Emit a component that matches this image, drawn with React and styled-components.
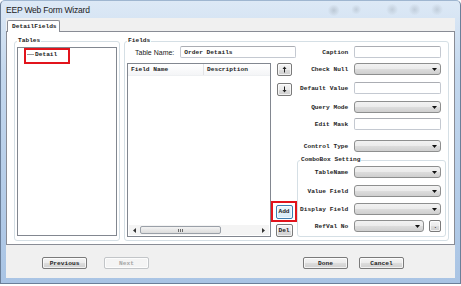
import React from "react";
import styled, { createGlobalStyle } from "styled-components";

const mono = `"Liberation Mono", "DejaVu Sans Mono", monospace`;
const sans = `"Liberation Sans", Arial, sans-serif`;

const Global = createGlobalStyle`
  html, body { margin: 0; padding: 0; background: #fff; }
  body { width: 461px; height: 286px; overflow: hidden; }
  * { box-sizing: border-box; }
`;

const Window = styled.div`
  width: 461px;
  height: 284px;
  display: flex;
  flex-direction: column;
  padding: 0 5px 5px;
  border: 1px solid #6b7f99;
  border-top-color: #9fb6d0;
  border-radius: 5px 5px 0 0;
  background: linear-gradient(180deg, #dde9f6 0%, #c4d8ee 25%, #a9c4e4 100%);
`;

const TitleBar = styled.div`
  height: 17px;
  display: flex;
  align-items: center;
  font-family: ${sans};
  font-size: 8.5px;
  letter-spacing: -0.2px;
  color: #1b1b1b;
  background:
    radial-gradient(circle at 73% 55%, rgba(120,130,140,.3) 0, rgba(120,130,140,0) 6px),
    radial-gradient(circle at 78% 50%, rgba(120,130,140,.25) 0, rgba(120,130,140,0) 5px),
    radial-gradient(circle at 86% 50%, rgba(120,130,140,.25) 0, rgba(120,130,140,0) 6px),
    radial-gradient(circle at 91% 50%, rgba(120,130,140,.25) 0, rgba(120,130,140,0) 6px),
    radial-gradient(circle at 96% 50%, rgba(120,130,140,.25) 0, rgba(120,130,140,0) 6px);
`;

const Client = styled.div`
  flex: 1;
  display: flex;
  flex-direction: column;
  background: #f0f0f0;
  font-family: ${mono};
  font-size: 6.2px;
  font-weight: bold;
  color: #1e1e1e;
`;

const TabStrip = styled.div`
  height: 13px;
  display: flex;
  align-items: flex-end;
  padding-left: 1px;
`;

const Tab = styled.div`
  width: 53px;
  height: 12px;
  margin-bottom: -1px;
  position: relative;
  z-index: 1;
  display: flex;
  align-items: center;
  padding-left: 4px;
  background: #fff;
  border: 1px solid #898c95;
  border-bottom: none;
  border-radius: 2px 2px 0 0;
`;

const TabPage = styled.div`
  height: 214px;
  display: flex;
  gap: 4px;
  padding: 5px 5px 0 7px;
  background: #fff;
  border: 1px solid #898c95;
`;

const Group = styled.fieldset`
  margin: 0;
  min-width: 0;
  height: ${(p) => p.$h}px;
  width: ${(p) => (p.$w ? `${p.$w}px` : "auto")};
  flex: ${(p) => (p.$w ? "none" : "1")};
  padding: 0 2px 3px;
  border: 1px solid #d5dfe5;
  border-radius: 3px;
  display: flex;
  flex-direction: ${(p) => p.$dir || "column"};
`;

const Legend = styled.legend`
  padding: 0 1px;
  line-height: 8px;
  font-size: 6.2px;
`;

const ListBox = styled.div`
  flex: 1;
  margin: 2px 0 1px;
  border: 1px solid #828790;
  padding: 0 0 0 6px;
`;

const Mark = styled.div`
  width: ${(p) => p.$w}px;
  height: ${(p) => p.$h}px;
  border: 2px solid #e2141c;
  display: flex;
  align-items: ${(p) => p.$align || "center"};
  justify-content: center;
`;

const TreeItem = styled.div`
  display: flex;
  align-items: center;
  gap: 1px;
  padding: 1px 0 0 1px;
  width: 100%;
  &::before {
    content: "";
    width: 7px;
    height: 1px;
    background: #9a9a9a;
  }
`;

const LeftCol = styled.div`
  width: 170px;
  display: flex;
  flex-direction: column;
  padding-top: 1px;
`;

const RightCol = styled.div`
  flex: 1;
  display: flex;
  flex-direction: column;
  padding-top: 1px;
`;

const TableNameRow = styled.div`
  height: 12px;
  display: flex;
  align-items: center;
  padding-left: 8px;
  gap: 6px;
`;

const SansLabel = styled.span`
  font-family: ${sans};
  font-weight: normal;
  font-size: 7px;
  color: #222;
`;

const TextBox = styled.div`
  width: ${(p) => (p.$w ? `${p.$w}px` : "100%")};
  height: ${(p) => p.$h || 12}px;
  border: 1px solid #c4c9d1;
  border-top-color: #abadb3;
  border-radius: 2px;
  background: #fff;
  display: flex;
  align-items: center;
  padding-left: 3px;
`;

const ListArea = styled.div`
  flex: 1;
  display: flex;
  margin-top: 5px;
`;

const ListView = styled.div`
  width: 144px;
  display: flex;
  flex-direction: column;
  border: 1px solid #828790;
  background: #fff;
`;

const ListHeader = styled.div`
  height: 12px;
  display: flex;
  background: linear-gradient(#fff, #f4f5f7);
  border-bottom: 1px solid #eef0f2;
`;

const HeaderCell = styled.div`
  width: ${(p) => (p.$w ? `${p.$w}px` : "auto")};
  flex: ${(p) => (p.$w ? "none" : "1")};
  display: flex;
  align-items: center;
  padding-left: 3px;
  border-right: 1px solid ${(p) => (p.$w ? "#e2e3e5" : "transparent")};
`;

const ListBody = styled.div`
  flex: 1;
`;

const HScroll = styled.div`
  height: 10px;
  margin: 0 1px 1px;
  display: flex;
  align-items: center;
  background: #f4f4f4;
`;

const ScrollArrow = styled.div`
  width: 11px;
  display: flex;
  justify-content: center;
`;

const Thumb = styled.div`
  width: 81px;
  height: 8px;
  border: 1px solid #9aa0a8;
  border-radius: 2px;
  background: linear-gradient(#f3f3f3, #dcdcdc);
  display: flex;
  align-items: center;
  justify-content: center;
  gap: 1px;
  span {
    width: 1px;
    height: 3px;
    background: #6a6a6a;
  }
`;

const Track = styled.div`
  flex: 1;
`;

const SideCol = styled.div`
  width: 26px;
  display: flex;
  flex-direction: column;
  align-items: center;
`;

const Btn = styled.button`
  width: ${(p) => p.$w}px;
  height: ${(p) => p.$h}px;
  margin: ${(p) => p.$m || "0"};
  padding: 0;
  font-family: ${mono};
  font-size: 6.2px;
  font-weight: bold;
  color: ${(p) => (p.$disabled ? "#a6a6a6" : "#1e1e1e")};
  border: 1px solid ${(p) => (p.$focus ? "#3c7fb1" : p.$disabled ? "#c2c5c8" : "#7a7a7a")};
  border-radius: 2px;
  background: ${(p) =>
    p.$focus
      ? "linear-gradient(#eaf6fd, #d6ecf8)"
      : p.$disabled
      ? "#f4f4f4"
      : "linear-gradient(#f4f4f4 0%, #ebebeb 50%, #dddddd 51%, #cfcfcf 100%)"};
  box-shadow: inset 0 0 0 1px rgba(255,255,255,.7);
  display: flex;
  align-items: center;
  justify-content: center;
`;

const Spacer = styled.div`
  flex: 1;
`;

const Row = styled.div`
  height: ${(p) => p.$h || 12}px;
  margin-top: ${(p) => p.$mt || 0}px;
  display: grid;
  grid-template-columns: 1fr 87px;
  column-gap: 6px;
  align-items: center;
  padding-right: ${(p) => p.$pr ?? 5}px;
`;

const Label = styled.span`
  text-align: right;
  white-space: nowrap;
`;

const Combo = styled.div`
  height: 100%;
  border: 1px solid #8e8f8f;
  border-radius: 3px;
  background: linear-gradient(#f2f2f2 0%, #ebebeb 50%, #dddddd 51%, #cfcfcf 100%);
  display: flex;
  align-items: center;
  justify-content: flex-end;
  padding-right: 3px;
`;

const ComboPair = styled.div`
  height: 100%;
  display: flex;
  gap: 5px;
  ${Combo} { flex: 1; }
`;

const SubGroup = styled(Group)`
  flex: 1;
  margin-top: 4px;
  padding: 0 4px 3px 2px;
`;

const ButtonBar = styled.div`
  flex: 1;
  display: flex;
  justify-content: space-between;
  align-items: flex-start;
  padding: 12px 51px 0 36px;
`;

const ButtonGroup = styled.div`
  display: flex;
  gap: ${(p) => p.$gap}px;
`;

const Arrow = () => (
  <svg width="5" height="3" viewBox="0 0 5 3">
    <path d="M0 0h5L2.5 3z" fill="#111" />
  </svg>
);

const UpDown = ({ down }) => (
  <svg width="5" height="7" viewBox="0 0 5 7" style={down ? { transform: "rotate(180deg)" } : undefined}>
    <path d="M2.5 0.5L0.5 3h1.5v3.5h1V3h1.5z" fill="#222" />
  </svg>
);

const ComboRow = ({ label, mt, pr }) => (
  <Row $mt={mt} $pr={pr}>
    <Label>{label}</Label>
    <Combo>
      <Arrow />
    </Combo>
  </Row>
);

const TextRow = ({ label, mt }) => (
  <Row $mt={mt}>
    <Label>{label}</Label>
    <TextBox />
  </Row>
);

export default function App() {
  return (
    <>
      <Global />
      <Window>
        <TitleBar>EEP Web Form Wizard</TitleBar>
        <Client>
          <TabStrip>
            <Tab>DetailFields</Tab>
          </TabStrip>
          <TabPage>
            <Group $w={106} $h={204}>
              <Legend>Tables</Legend>
              <ListBox>
                <Mark $w={46} $h={16} $align="flex-start">
                  <TreeItem>Detail</TreeItem>
                </Mark>
              </ListBox>
            </Group>
            <Group $h={204} $dir="row">
              <Legend>Fields</Legend>
              <LeftCol>
                <TableNameRow>
                  <SansLabel>Table Name:</SansLabel>
                  <TextBox $w={116}>Order Details</TextBox>
                </TableNameRow>
                <ListArea>
                  <ListView>
                    <ListHeader>
                      <HeaderCell $w={76}>Field Name</HeaderCell>
                      <HeaderCell>Description</HeaderCell>
                    </ListHeader>
                    <ListBody />
                    <HScroll>
                      <ScrollArrow>
                        <svg width="3" height="5" viewBox="0 0 3 5">
                          <path d="M3 0v5L0 2.5z" fill="#333" />
                        </svg>
                      </ScrollArrow>
                      <Thumb>
                        <span />
                        <span />
                        <span />
                      </Thumb>
                      <Track />
                      <ScrollArrow>
                        <svg width="3" height="5" viewBox="0 0 3 5">
                          <path d="M0 0v5L3 2.5z" fill="#333" />
                        </svg>
                      </ScrollArrow>
                    </HScroll>
                  </ListView>
                  <SideCol>
                    <Btn $w={15} $h={13}>
                      <UpDown />
                    </Btn>
                    <Btn $w={15} $h={13} $m="7px 0 0">
                      <UpDown down />
                    </Btn>
                    <Spacer />
                    <Mark $w={26} $h={21}>
                      <Btn $w={17} $h={14} $focus>
                        Add
                      </Btn>
                    </Mark>
                    <Btn $w={17} $h={13} $m="2px 0 0">
                      Del
                    </Btn>
                  </SideCol>
                </ListArea>
              </LeftCol>
              <RightCol>
                <TextRow label="Caption" />
                <ComboRow label="Check Null" mt={5} />
                <TextRow label="Default Value" mt={7} />
                <ComboRow label="Query Mode" mt={7} />
                <TextRow label="Edit Mask" mt={5} />
                <ComboRow label="Control Type" mt={10} />
                <SubGroup>
                  <Legend>ComboBox Setting</Legend>
                  <ComboRow label="TableName" mt={2} pr={0} />
                  <ComboRow label="Value Field" mt={7} pr={0} />
                  <ComboRow label="Display Field" mt={6} pr={0} />
                  <Row $mt={5} $pr={0}>
                    <Label>RefVal No</Label>
                    <ComboPair>
                      <Combo>
                        <Arrow />
                      </Combo>
                      <Btn $w={12} $h={12}>
                        .
                      </Btn>
                    </ComboPair>
                  </Row>
                </SubGroup>
              </RightCol>
            </Group>
          </TabPage>
          <ButtonBar>
            <ButtonGroup $gap={17}>
              <Btn $w={45} $h={12}>Previous</Btn>
              <Btn $w={45} $h={12} $disabled>Next</Btn>
            </ButtonGroup>
            <ButtonGroup $gap={11}>
              <Btn $w={45} $h={12}>Done</Btn>
              <Btn $w={45} $h={12}>Cancel</Btn>
            </ButtonGroup>
          </ButtonBar>
        </Client>
      </Window>
    </>
  );
}
